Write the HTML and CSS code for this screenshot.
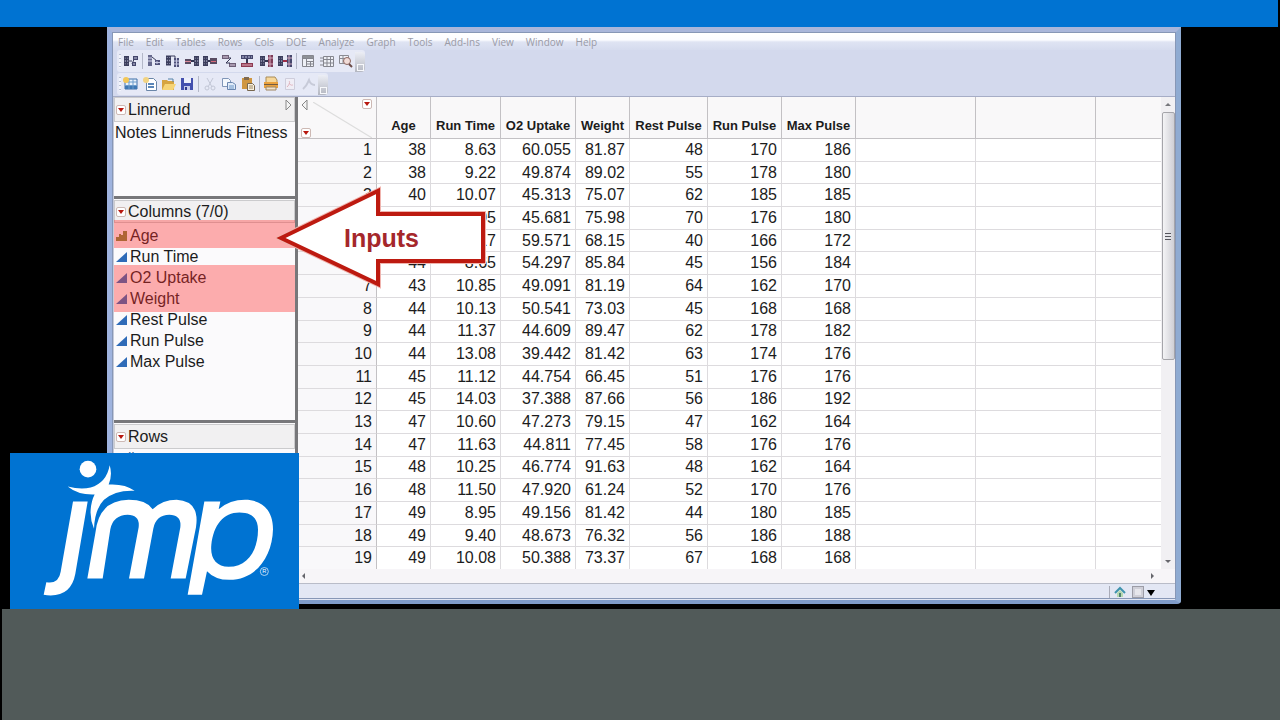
FILE: index.html
```html
<!DOCTYPE html>
<html lang="en">
<head>
<meta charset="utf-8">
<title>Linnerud - JMP</title>
<link rel="stylesheet" href="styles.css">
</head>
<body>
<svg class="defs" aria-hidden="true">
  <defs>
    <symbol id="grid-l" viewBox="0 0 6 12"><path d="M0 0h6v12H0z" fill="#3b3d5c"/><path d="M1 2h1v1H1zM4 2h1v1H4zM1 5h1v2H1zM4 5h1v2H4zM1 9h1v1H1zM4 9h1v1H4z" fill="#c9cbe2"/></symbol>
    <symbol id="tri" viewBox="0 0 12 10"><path d="M0 10 11 0v10z" fill="#2f6bb8"/></symbol>
    <symbol id="steps" viewBox="0 0 12 10"><path d="M0 10V6h3V3h2v1h2V0h4v10z" fill="#7f8a3a"/></symbol>
  </defs>
</svg>
<div class="banner"></div>
<main class="stage">
  <div class="window">
    <nav class="menu">
      <button>File</button><button>Edit</button><button>Tables</button><button>Rows</button><button>Cols</button><button>DOE</button><button>Analyze</button><button>Graph</button><button>Tools</button><button>Add-Ins</button><button>View</button><button>Window</button><button>Help</button>
    </nav>
    <div class="toolbar">
      <span class="grip"></span>
      <div class="tools one">
        <button aria-label="Summary"><svg viewBox="0 0 16 16"><use href="#grid-l" x="1" y="2" width="5" height="12"/><path d="M6 8h3M9 11l3-7M9 11h3" stroke="#3b3d5c" stroke-width="1" fill="none"/><path d="M10 3h5v4h-5zM9 9h4v4H9z" fill="#45476c"/><path d="M11 5h3M10 11h2" stroke="#c9cbe2"/></svg></button>
      </div>
      <span class="sep"></span>
      <div class="tools eight">
        <button aria-label="Subset"><svg viewBox="0 0 16 16"><path d="M2 2h4v11H2z" fill="#66688c"/><path d="M2 5h4M2 8h4" stroke="#d8daf0"/><path d="M6 4l5 4" stroke="#3b3d5c"/><path d="M9 7h5v5H9z" fill="#50527a"/><path d="M11 8v3M9 9.500h5" stroke="#c8cae4"/></svg></button>
        <button aria-label="Sort"><svg viewBox="0 0 16 16"><use href="#grid-l" x="1" y="2" width="5" height="11"/><path d="M6 3h4v5" stroke="#3b3d5c" fill="none"/><path d="M9 5h5v9H9z" fill="#50527a"/><path d="M9 8h5M9 11h5M11.500 5v9" stroke="#c8cae4"/></svg></button>
        <button aria-label="Stack"><svg viewBox="0 0 16 16"><path d="M1 6h6v5H1z" fill="#584b62"/><path d="M1 8.500h7" stroke="#d88a9a"/><path d="M7 8h3" stroke="#333552" stroke-width="2"/><use href="#grid-l" x="10" y="2" width="5" height="12"/></svg></button>
        <button aria-label="Split"><svg viewBox="0 0 16 16"><use href="#grid-l" x="1" y="2" width="5" height="12"/><path d="M6 8h3" stroke="#333552" stroke-width="2"/><path d="M8 5h7v6H8z" fill="#584b62"/><path d="M9 8.500h5" stroke="#d86a7a"/></svg></button>
        <button aria-label="Transpose"><svg viewBox="0 0 16 16"><path d="M1 2h7v4H1zM8 10h7v4H8z" fill="#6c5e76"/><path d="M8 5h2L5 10h4" stroke="#333552" stroke-width="1" fill="none"/><path d="M2 4h5M9 12h5" stroke="#e0d0e4"/></svg></button>
        <button aria-label="Concatenate"><svg viewBox="0 0 16 16"><path d="M2 2h12v4H2z" fill="#45476c"/><path d="M3 4h10" stroke="#c0c3e0" stroke-dasharray="2 1"/><path d="M8 6v4" stroke="#333552" stroke-width="2"/><path d="M2 10h12v4H2z" fill="#8d3a52"/><path d="M3 12h10" stroke="#e2b0be"/></svg></button>
        <button aria-label="Join"><svg viewBox="0 0 16 16"><use href="#grid-l" x="2" y="2" width="5" height="12"/><path d="M7 8h3" stroke="#333552" stroke-width="2"/><path d="M10 2h5v12h-5z" fill="#7d3c58"/><path d="M10 5h5M10 11h5M12 2v12" stroke="#d6aabd"/></svg></button>
        <button aria-label="Update"><svg viewBox="0 0 16 16"><use href="#grid-l" x="1" y="2" width="5" height="12"/><path d="M6 8h4" stroke="#a02c45" stroke-width="2"/><path d="M10 2h5v12h-5z" fill="#45476c"/><path d="M10 5h5M10 11h5M12 2v12" stroke="#cfa8bd"/></svg></button>
      </div>
      <span class="sep"></span>
      <div class="tools three">
        <button aria-label="Tabulate"><svg viewBox="0 0 16 16"><path d="M2.500 2.500h11v11h-11zM2 5.500h12M6.500 5v9M10.500 8v6M6 8.500h8M6 11h8" stroke="#85868e" fill="#eef0f6"/><path d="M3 3h10v2H3z" fill="#8d9096"/></svg></button>
        <button aria-label="Missing data"><svg viewBox="0 0 16 16"><path d="M4.500 3.500h10v10h-10zM4 6.500h10M4 10h10M8 3v10M11.500 3v10M1 5h3M1 8h3M1 12h3" stroke="#85868e" fill="#eef0f6"/></svg></button>
        <button aria-label="Compare"><svg viewBox="0 0 16 16"><path d="M1.500 2.500h9v8h-9zM1 5.500h10M5 3v8" stroke="#8a8b92" fill="#eef0f6"/><circle cx="9" cy="8" r="3.500" fill="#f1dcd8" stroke="#8c6660"/><path d="M11 11l3 3" stroke="#6b4b48" stroke-width="2"/></svg></button>
      </div>
      <span class="tail"></span>
    </div>
    <div class="toolbar">
      <span class="grip"></span>
      <div class="tools four">
        <button aria-label="New table"><svg viewBox="0 0 16 16"><path d="M2 3h12v10H2z" fill="#eaf2fb" stroke="#3e6fa8"/><path d="M2 9h12v4H2z" fill="#3f78b4"/><path d="M6 3v10M10 3v10M2 6h12M2 9.500h12" stroke="#6c9ccc"/><circle cx="3" cy="4" r="3" fill="#f3c758"/></svg></button>
        <button aria-label="New script"><svg viewBox="0 0 16 16"><path d="M4.500 2.500h7l3 3v9h-10z" fill="#fff" stroke="#6a86a8"/><path d="M6 8h6M6 11h6" stroke="#5b86b8" stroke-width="2"/><circle cx="4" cy="4" r="3" fill="#f2d382"/></svg></button>
        <button aria-label="Open"><svg viewBox="0 0 16 16"><path d="M2 4h5l1 1h6v9H2z" fill="#d6a440"/><path d="M2 14 5 8h11l-3 6z" fill="#f6d476"/><path d="M8 3h5v3" stroke="#5683a8" fill="none"/></svg></button>
        <button aria-label="Save"><svg viewBox="0 0 16 16"><path d="M2 2h12v12H2z" fill="#4350ae"/><path d="M5 2h7v5H5z" fill="#eceffb"/><path d="M5 10h6v4H5z" fill="#c6cbea"/><path d="M6 11h2v3H6z" fill="#30398a"/></svg></button>
      </div>
      <span class="sep"></span>
      <div class="tools three">
        <button aria-label="Cut"><svg viewBox="0 0 16 16" opacity=".5"><path d="M5 2l5 9M11 2 6 11" stroke="#a0a6b8" stroke-width="1"/><circle cx="5" cy="12" r="2" fill="none" stroke="#a0a6b8"/><circle cx="11" cy="12" r="2" fill="none" stroke="#a0a6b8"/></svg></button>
        <button aria-label="Copy"><svg viewBox="0 0 16 16"><path d="M1.500 2.500h6l2 2v6h-8z" fill="#f4f8fd" stroke="#8096b8"/><path d="M6.500 6.500h5l3 2v5h-8z" fill="#dfeaf8" stroke="#6a86b0"/><path d="M8 10h5M8 12h5" stroke="#6a96c8"/></svg></button>
        <button aria-label="Paste"><svg viewBox="0 0 16 16"><path d="M2 2h10v11H2z" fill="#cf9640"/><path d="M4 1h5v3H4z" fill="#816a4e"/><path d="M7.500 7.500h5l2 2v5h-7z" fill="#f7f0e0" stroke="#77664e"/><path d="M9 10h4M9 12h4" stroke="#a08a66"/></svg></button>
      </div>
      <span class="sep"></span>
      <div class="tools three">
        <button aria-label="Print"><svg viewBox="0 0 16 16"><path d="M3 1h9l2 3v3H3z" fill="#f6d79a" stroke="#a98c58"/><path d="M1 6h14v6H1z" fill="#e9a13e"/><path d="M1 8.500h14" stroke="#735c42"/><path d="M3 11h10v3H3z" fill="#f0e3cd" stroke="#a08660"/></svg></button>
        <button aria-label="PDF"><svg viewBox="0 0 16 16" opacity=".5"><path d="M3.500 2.500h9v11h-9z" fill="#fbf4f6" stroke="#b8b3c2"/><path d="M5 11c3-3 3-5 2-6M7 7c2 3 3 2 4 2" stroke="#da7d86" fill="none"/></svg></button>
        <button aria-label="Script"><svg viewBox="0 0 16 16" opacity=".5"><path d="M2 13c4-3 5-7 6-9 1 3 3 5 6 5" stroke="#a9adbb" stroke-width="2" fill="none"/></svg></button>
      </div>
      <span class="tail"></span>
    </div>
    <div class="body">
      <aside class="side">
        <section class="panel notes">
          <header><button class="red" aria-label="Table menu"></button><h2>Linnerud</h2><svg class="fold" viewBox="0 0 8 12"><path d="M1 1l5 5-5 5z" fill="#f4f4f4" stroke="#888"/></svg></header>
          <p>Notes Linneruds Fitness</p>
        </section>
        <section class="panel cols">
          <header><button class="red" aria-label="Columns menu"></button><h2>Columns (7/0)</h2></header>
          <ul>
            <li class="hit first"><svg><use href="#steps"/></svg>Age</li>
            <li><svg><use href="#tri"/></svg>Run Time</li>
            <li class="hit"><svg><use href="#tri"/></svg>O2 Uptake</li>
            <li class="hit"><svg><use href="#tri"/></svg>Weight</li>
            <li><svg><use href="#tri"/></svg>Rest Pulse</li>
            <li><svg><use href="#tri"/></svg>Run Pulse</li>
            <li><svg><use href="#tri"/></svg>Max Pulse</li>
          </ul>
        </section>
        <section class="panel rows">
          <header><button class="red" aria-label="Rows menu"></button><h2>Rows</h2></header>
          <p><span>All rows</span><span>31</span></p>
        </section>
      </aside>
      <div class="sheet">
        <div class="grid">
          <table>
            <colgroup><col class="w-no"><col class="w-age"><col class="w-time"><col class="w-o2"><col class="w-age"><col class="w-rest"><col class="w-pulse"><col class="w-pulse"><col class="w-free"><col class="w-free"><col></colgroup>
            <thead><tr>
              <th><div class="corner"><svg class="fold" viewBox="0 0 8 12"><path d="M6 1 1 6l5 5z" fill="#f4f4f4" stroke="#888"/></svg><svg class="diag" viewBox="0 0 60 32" preserveAspectRatio="none"><path d="M0 0l60 32" stroke="#ddd"/></svg><button class="red top" aria-label="Column options"></button><button class="red low" aria-label="Row options"></button></div></th>
              <th>Age</th><th>Run Time</th><th>O2 Uptake</th><th>Weight</th><th>Rest Pulse</th><th>Run Pulse</th><th>Max Pulse</th><th></th><th></th><th></th>
            </tr></thead>
            <tbody>
              <tr><td>1</td><td>38</td><td>8.63</td><td>60.055</td><td>81.87</td><td>48</td><td>170</td><td>186</td><td></td><td></td><td></td></tr>
              <tr><td>2</td><td>38</td><td>9.22</td><td>49.874</td><td>89.02</td><td>55</td><td>178</td><td>180</td><td></td><td></td><td></td></tr>
              <tr><td>3</td><td>40</td><td>10.07</td><td>45.313</td><td>75.07</td><td>62</td><td>185</td><td>185</td><td></td><td></td><td></td></tr>
              <tr><td>4</td><td>40</td><td>11.95</td><td>45.681</td><td>75.98</td><td>70</td><td>176</td><td>180</td><td></td><td></td><td></td></tr>
              <tr><td></td><td></td><td>8.17</td><td>59.571</td><td>68.15</td><td>40</td><td>166</td><td>172</td><td></td><td></td><td></td></tr>
              <tr><td></td><td>44</td><td>8.65</td><td>54.297</td><td>85.84</td><td>45</td><td>156</td><td>184</td><td></td><td></td><td></td></tr>
              <tr><td>7</td><td>43</td><td>10.85</td><td>49.091</td><td>81.19</td><td>64</td><td>162</td><td>170</td><td></td><td></td><td></td></tr>
              <tr><td>8</td><td>44</td><td>10.13</td><td>50.541</td><td>73.03</td><td>45</td><td>168</td><td>168</td><td></td><td></td><td></td></tr>
              <tr><td>9</td><td>44</td><td>11.37</td><td>44.609</td><td>89.47</td><td>62</td><td>178</td><td>182</td><td></td><td></td><td></td></tr>
              <tr><td>10</td><td>44</td><td>13.08</td><td>39.442</td><td>81.42</td><td>63</td><td>174</td><td>176</td><td></td><td></td><td></td></tr>
              <tr><td>11</td><td>45</td><td>11.12</td><td>44.754</td><td>66.45</td><td>51</td><td>176</td><td>176</td><td></td><td></td><td></td></tr>
              <tr><td>12</td><td>45</td><td>14.03</td><td>37.388</td><td>87.66</td><td>56</td><td>186</td><td>192</td><td></td><td></td><td></td></tr>
              <tr><td>13</td><td>47</td><td>10.60</td><td>47.273</td><td>79.15</td><td>47</td><td>162</td><td>164</td><td></td><td></td><td></td></tr>
              <tr><td>14</td><td>47</td><td>11.63</td><td>44.811</td><td>77.45</td><td>58</td><td>176</td><td>176</td><td></td><td></td><td></td></tr>
              <tr><td>15</td><td>48</td><td>10.25</td><td>46.774</td><td>91.63</td><td>48</td><td>162</td><td>164</td><td></td><td></td><td></td></tr>
              <tr><td>16</td><td>48</td><td>11.50</td><td>47.920</td><td>61.24</td><td>52</td><td>170</td><td>176</td><td></td><td></td><td></td></tr>
              <tr><td>17</td><td>49</td><td>8.95</td><td>49.156</td><td>81.42</td><td>44</td><td>180</td><td>185</td><td></td><td></td><td></td></tr>
              <tr><td>18</td><td>49</td><td>9.40</td><td>48.673</td><td>76.32</td><td>56</td><td>186</td><td>188</td><td></td><td></td><td></td></tr>
              <tr><td>19</td><td>49</td><td>10.08</td><td>50.388</td><td>73.37</td><td>67</td><td>168</td><td>168</td><td></td><td></td><td></td></tr>
            </tbody>
          </table>
          <div class="vbar"><button class="up" aria-label="Scroll up"></button><div class="thumb"><i></i></div><button class="down" aria-label="Scroll down"></button></div>
        </div>
        <div class="hbar"><button class="prev" aria-label="Scroll left"></button><button class="next" aria-label="Scroll right"></button></div>
      </div>
      <div class="callout">
        <svg viewBox="0 0 210 104"><path d="M5 52 102 5v23h105v47H102v23z" fill="#fff" stroke="#f0b4ae" stroke-width="6"/><path d="M5 52 102 5v23h105v47H102v23z" fill="#fff" stroke="#bd1a10" stroke-width="4"/></svg>
        <strong>Inputs</strong>
      </div>
    </div>
    <div class="status">
      <button aria-label="Home"><svg viewBox="0 0 12 12"><path d="M1 7l5-5 5 5" fill="none" stroke="#3f93ad" stroke-width="2"/><path d="M3 7l3-3 3 3v4H3z" fill="#b5d8b0"/><path d="M5 7h2v4H5z" fill="#4c7f74"/></svg></button>
      <input type="checkbox" aria-label="Window selected">
      <button aria-label="Window list"><svg viewBox="0 0 12 12"><path d="M2 4h8l-4 6z" fill="#000"/></svg></button>
    </div>
  </div>
  <div class="logo">
    <svg viewBox="30 40 867 467" role="img" aria-label="jmp">
      <g fill="#fff">
        <circle cx="264" cy="88" r="25"/>
        <path d="M203 140Q242 150 272 143Q320 128 329 76Q338 105 326 134Q374 131 404 153Q346 150 312 180Q284 208 282 267Q265 228 276 185Q279 173 284 164Q235 166 203 140Z"/>
        <path d="M219 185H263L226 402Q214 467 152 467Q141 467 131 465L139 427Q176 434 182 396Z"/>
        <path d="M262 416 286 280Q296 181 386 180Q438 180 458 208Q488 180 530 180Q600 184 588 262L557 416H512L541 262Q545 226 508 225Q468 226 460 266L432 416H387L416 262Q420 226 383 225Q340 226 331 268L308 416Z"/>
        <path fill-rule="evenodd" d="M613 185H661L656 208Q690 180 735 180C790 180 819 215 819 268C817 350 768 420 688 420Q645 420 621 394L606 465H563ZM718 218C670 218 641 255 634 315C630 355 648 381 686 381C744 381 774 330 774 270C774 236 756 218 718 218Z"/>
        <circle cx="793" cy="395" r="12" fill="none" stroke="#fff" stroke-width="2"/>
        <text x="793" y="401" text-anchor="middle" font-size="17">R</text>
      </g>
    </svg>
  </div>
</main>
<footer class="slab"></footer>
</body>
</html>
```
FILE: styles.css
```css
* { box-sizing: border-box; }
body {
  margin: 0;
  min-height: 100vh;
  display: flex;
  flex-direction: column;
  background: #000;
  color: #1c1c1c;
  font: 16px/21px "Liberation Sans", Arial, sans-serif;
}
button { padding: 0; border: 0; background: none; font: inherit; color: inherit; }
svg { display: block; }
.defs { position: absolute; width: 0; height: 0; }
.banner { height: 27px; margin-right: 2px; background: #0073d2; }
.slab { height: 111px; margin-left: 2px; background: #515a59; }
.stage {
  position: relative;
  flex: 1;
  display: flex;
  padding: 0 99px 5px 107px;
}
.window {
  flex: 1;
  display: flex;
  flex-direction: column;
  border: solid #9bb0d6;
  border-width: 6px 6px 4px;
  border-color: #a9b6da #8fabd2 #7f9bc8 #9fb3de;
  border-radius: 0 0 4px 4px;
  outline: 1px solid #8797b6;
  outline-offset: -6px;
  background: #d3d9ed;
}

.menu {
  display: flex;
  gap: 12px;
  height: 17px;
  padding: 0 5px;
  background: linear-gradient(#fff 0, #fbfcff 7px, #dfe4f3 9px, #d5dbee);
  font: 10px/18px "Open Sans", "Noto Sans", sans-serif;
  color: #9a9ba6;
}
.toolbar {
  display: flex;
  align-items: center;
  align-self: flex-start;
  height: 22px;
  margin-left: 4px;
  padding-left: 2px;
  margin-bottom: 1px;
  background: #e6e9f6;
  border-radius: 3px;
}
.grip { width: 2px; height: 14px; margin-right: 1px; background: repeating-linear-gradient(#b9bfd2 0 1px, #f3f5fb 1px 4px); }
.tools { display: grid; grid-auto-flow: column; grid-auto-columns: 1fr; }
.one { width: 18px; }
.three { width: 56px; }
.four { width: 74px; }
.eight { width: 149px; }
.tools button { display: flex; justify-content: center; }
.tools svg { width: 16px; height: 16px; }
.sep { width: 1px; height: 16px; margin: 0 2px; background: #b4b8c8; }
.tail { width: 10px; height: 20px; align-self: flex-end; display: flex; align-items: flex-end; justify-content: center; border-radius: 0 4px 4px 0; background: linear-gradient(#eceef5, #b4b7c1); }
.tail::after { content: ""; width: 5px; height: 5px; margin-bottom: 1px; border: 1px solid #f7f8fb; }

.body { position: relative; flex: 1; display: flex; min-height: 0; border-top: 1px solid #a6adc6; background: #fbfafb; }
.side { width: 185px; display: flex; flex-direction: column; border-left: 1px solid #c5cada; border-right: 3px solid #77777a; background: #fbfafc; }
.panel header {
  display: flex;
  align-items: center;
  height: 25px;
  padding: 0 1px;
  border: 1px solid #cbcbcd;
  background: #f1f0f1;
}
.panel h2 { flex: 1; margin: 0 0 0 2px; font: inherit; }
.panel p { margin: 0; padding: 0 1px; }
.red {
  width: 10px;
  height: 10px;
  display: flex;
  align-items: center;
  justify-content: center;
  border: 1px solid #cdb9b4;
  border-radius: 2px;
  background: #fff;
}
.red::after { content: ""; border: solid transparent; border-width: 4px 3px 0; border-top-color: #b8180f; }
.fold { width: 8px; height: 12px; }
.notes { height: 102px; border-bottom: 3px solid #77777a; }
.notes .fold { align-self: flex-start; margin-top: 1px; }
.cols { height: 224px; padding-top: 1px; border-bottom: 3px solid #77777a; }
.cols header { height: 23px; }
.cols ul { margin: 0; padding: 2px 0 0; list-style: none; }
.cols li { display: flex; align-items: center; height: 21px; padding-left: 2px; }
.cols li svg { width: 12px; height: 10px; margin-right: 2px; }
.hit { position: relative; }
.hit::after { content: ""; position: absolute; inset: 0 0 -1px; background: #ff2d2d; opacity: .38; }
.first::after { inset: -5px 0 -2px; }
.hit:not(.first)::after { inset: -2px 0 2px; }
.hit + .hit::after { inset: -2px 0 -3px; }
.rows { flex: 1; min-height: 0; overflow: hidden; padding-top: 1px; }
.rows p { display: flex; justify-content: space-between; padding: 0 4px; font-size: 15px; line-height: 18px; color: #3d6f9f; }

.sheet { flex: 1; display: flex; flex-direction: column; min-width: 0; }
.grid { flex: 1; display: flex; min-height: 0; }
table { flex: 1; height: 100%; table-layout: fixed; border-collapse: separate; border-spacing: 0; width: 100%; background: #fff; }
.w-no { width: 79px; }
.w-age { width: 54px; }
.w-time { width: 70px; }
.w-o2 { width: 75px; }
.w-rest { width: 78px; }
.w-pulse { width: 74px; }
.w-free { width: 120px; }
th { height: 42px; padding: 0; vertical-align: bottom; border: solid #c3c1c4; border-width: 0 1px 1px 0; background: #f9f8f9; font-size: 13px; line-height: 24px; white-space: nowrap; }
td { height: 20px; padding: 0 4px 0 0; text-align: right; line-height: 20px; border: solid #dddbde; border-width: 0 1px 1px 0; }
td:first-child { background: #f9f8fa; border-right-color: #c3c1c4; }
th:last-child, td:last-child { border-right: 0; }
tr:last-child td { border-bottom: 0; }
.corner { display: grid; grid-template: 1fr 1fr / 1fr 1fr; height: 41px; padding: 2px 4px 0 3px; }
.corner .fold { grid-area: 1 / 1; }
.corner .top { grid-area: 1 / 2; justify-self: end; }
.corner .low { grid-area: 2 / 1; align-self: end; }
.corner .diag { grid-area: 1 / 1 / 3 / 3; width: 100%; height: 36px; padding-left: 12px; align-self: end; }

.vbar { width: 14px; display: flex; flex-direction: column; align-items: center; background: #f1f0f3; }
.vbar button { height: 15px; width: 14px; display: grid; place-items: center; }
.thumb { width: 13px; height: 248px; margin-bottom: auto; display: grid; place-items: center; border: 1px solid #a5a5aa; border-radius: 2px; background: linear-gradient(90deg, #f4f4f6, #cfcfd5); }
.thumb i { width: 6px; height: 7px; background: repeating-linear-gradient(#55555c 0 1px, #e5e5ea 1px 3px); }
.up::after { content: ""; border: solid transparent; border-width: 0 3px 3px; border-bottom-color: #77777c; }
.down::after { content: ""; border: solid transparent; border-width: 3px 3px 0; border-top-color: #66666c; }
.hbar { height: 14px; display: flex; justify-content: space-between; padding: 0 21px 0 4px; background: #f7f5f8; }
.hbar button { display: grid; place-items: center; }
.prev::after { content: ""; border: solid transparent; border-width: 3px 3px 3px 0; border-right-color: #66666c; }
.next::after { content: ""; border: solid transparent; border-width: 3px 0 3px 3px; border-left-color: #66666c; }
.callout { position: absolute; left: 163px; top: 89px; width: 210px; height: 104px; display: grid; }
.callout svg, .callout strong { grid-area: 1 / 1; }
.callout strong { align-self: center; padding-left: 68px; font-size: 25px; line-height: 28px; color: #a5272b; z-index: 1; }

.status { height: 17px; display: flex; align-items: center; justify-content: flex-end; gap: 6px; padding-right: 18px; border-top: 1px solid #b9bcc8; background: #e3e7f4; }
.status button { width: 12px; height: 12px; }
.status button:first-child { box-shadow: -4px 0 0 #e3e7f4, -5px 0 0 #a8abb8; }
.status input { appearance: none; width: 12px; height: 12px; margin: 0 -5px 0 0; border: 1px solid #9c9ca6; background: #e6e6ec; box-shadow: inset 0 0 0 2px #cfcfd8; }

.logo { position: absolute; left: 10px; bottom: 0; width: 289px; height: 156px; background: #0073d2; }
.logo svg { width: 100%; height: 100%; }
```
